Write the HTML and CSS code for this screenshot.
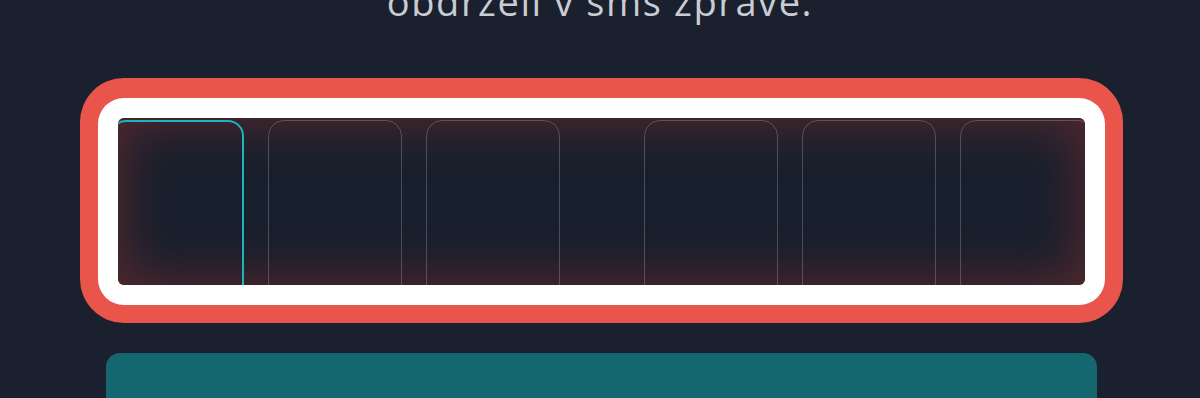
FILE: index.html
```html
<!DOCTYPE html>
<html lang="cs">
<head>
<meta charset="utf-8">
<title>Ověření</title>
<link rel="stylesheet" href="styles.css">
</head>
<body>
<main class="page">
  <p class="hint">obdrželi v sms zprávě.</p>
  <div class="ring-outer">
    <div class="ring-inner">
      <div class="otp">
        <span class="cell cell-active"></span>
        <span class="cell"></span>
        <span class="cell"></span>
        <span class="sep"></span>
        <span class="cell"></span>
        <span class="cell"></span>
        <span class="cell"></span>
      </div>
    </div>
  </div>
  <button class="submit" type="button"></button>
</main>
</body>
</html>
```

FILE: styles.css
```css
html, body {
  margin: 0;
  padding: 0;
  height: 100%;
}
body {
  background: #1a202e;
  overflow: hidden;
  font-family: "Open Sans", "Liberation Sans", sans-serif;
}
.page {
  width: 991px;
  margin-left: 106px;
  display: flex;
  flex-direction: column;
}
.hint {
  margin: -22px 0 0 0;
  text-align: center;
  color: #c9ccd3;
  font-size: 38px;
  line-height: 46px;
  letter-spacing: 1.6px;
  width: 988px;
}
.ring-outer {
  margin: 54px -26px 0 -26px;
  padding: 20px 18px 18px 18px;
  border-radius: 44px;
  background: #e9554b;
}
.ring-inner {
  padding: 20px;
  border-radius: 26px;
  background: #ffffff;
}
.otp {
  height: 167px;
  border-radius: 6px;
  overflow: hidden;
  display: flex;
  justify-content: center;
  gap: 24px;
  background: #181f2d;
  box-shadow: inset 0 0 50px 6px rgba(95, 42, 45, 0.85);
}
.cell {
  flex: 0 0 134px;
  height: 220px;
  margin-top: 2px;
  box-sizing: border-box;
  border: 1.5px solid rgba(200, 200, 210, 0.28);
  border-radius: 16px;
}
.cell-active {
  border: 2px solid #1fb3c2;
}
.sep {
  flex: 0 0 36px;
}
.submit {
  margin-top: 30px;
  height: 80px;
  border: 0;
  border-radius: 14px;
  background: #14666f;
  padding: 0;
}
```
